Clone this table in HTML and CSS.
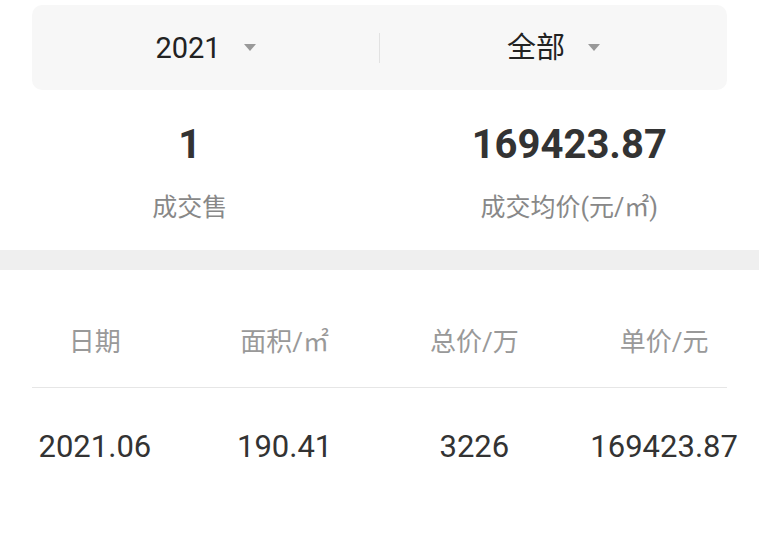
FILE: index.html
```html
<!DOCTYPE html>
<html lang="zh-CN">
<head>
<meta charset="utf-8">
<link rel="stylesheet" href="styles.css">
</head>
<body>
<div class="filter">
  <div class="filter-item"><span class="filter-text">2021</span><span class="arrow"></span></div>
  <div class="divider"></div>
  <div class="filter-item"><span class="filter-text">全部</span><span class="arrow"></span></div>
</div>
<div class="stats">
  <div class="stat">
    <div class="stat-num">1</div>
    <div class="stat-label">成交售</div>
  </div>
  <div class="stat">
    <div class="stat-num">169423.87</div>
    <div class="stat-label">成交均价(元/㎡)</div>
  </div>
</div>
<div class="band"></div>
<div class="table">
  <div class="row head">
    <div class="cell">日期</div>
    <div class="cell">面积/㎡</div>
    <div class="cell">总价/万</div>
    <div class="cell">单价/元</div>
  </div>
  <div class="rule"></div>
  <div class="row data">
    <div class="cell">2021.06</div>
    <div class="cell">190.41</div>
    <div class="cell">3226</div>
    <div class="cell">169423.87</div>
  </div>
</div>
</body>
</html>
```
FILE: styles.css
```css
html, body {
  margin: 0;
  padding: 0;
  background: #fff;
  font-family: Roboto, "Noto Sans CJK SC", sans-serif;
}
.filter {
  margin: 5px 32px 0;
  height: 85px;
  background: #f7f7f7;
  border-radius: 10px;
  display: flex;
  align-items: center;
}
.filter-item {
  flex: 1;
  display: flex;
  justify-content: center;
  align-items: center;
  gap: 23px;
}
.filter-text {
  font-size: 29px;
  color: #222;
  line-height: 36px;
}
.arrow {
  width: 0;
  height: 0;
  border-left: 6px solid transparent;
  border-right: 6px solid transparent;
  border-top: 7px solid #999;
}
.divider {
  width: 1px;
  height: 30px;
  background: #e2e2e2;
}
.stats {
  display: flex;
  padding: 31px 0 26px;
}
.stat {
  flex: 1;
  display: flex;
  flex-direction: column;
  align-items: center;
}
.stat-num {
  font-size: 40px;
  font-weight: 700;
  line-height: 48px;
  color: #333;
}
.stat-label {
  margin-top: 23px;
  font-size: 25px;
  line-height: 32px;
  color: #888;
}
.band {
  height: 20px;
  background: #efefef;
}
.table {
  padding-top: 56px;
}
.row {
  display: flex;
}
.cell {
  flex: 1;
  text-align: center;
  white-space: nowrap;
}
.head .cell {
  font-size: 26px;
  line-height: 32px;
  color: #999;
}
.rule {
  margin: 29px 32px 0;
  height: 1px;
  background: #e6e6e6;
}
.data {
  margin-top: 39px;
}
.data .cell {
  font-size: 31px;
  line-height: 40px;
  color: #333;
}
```
